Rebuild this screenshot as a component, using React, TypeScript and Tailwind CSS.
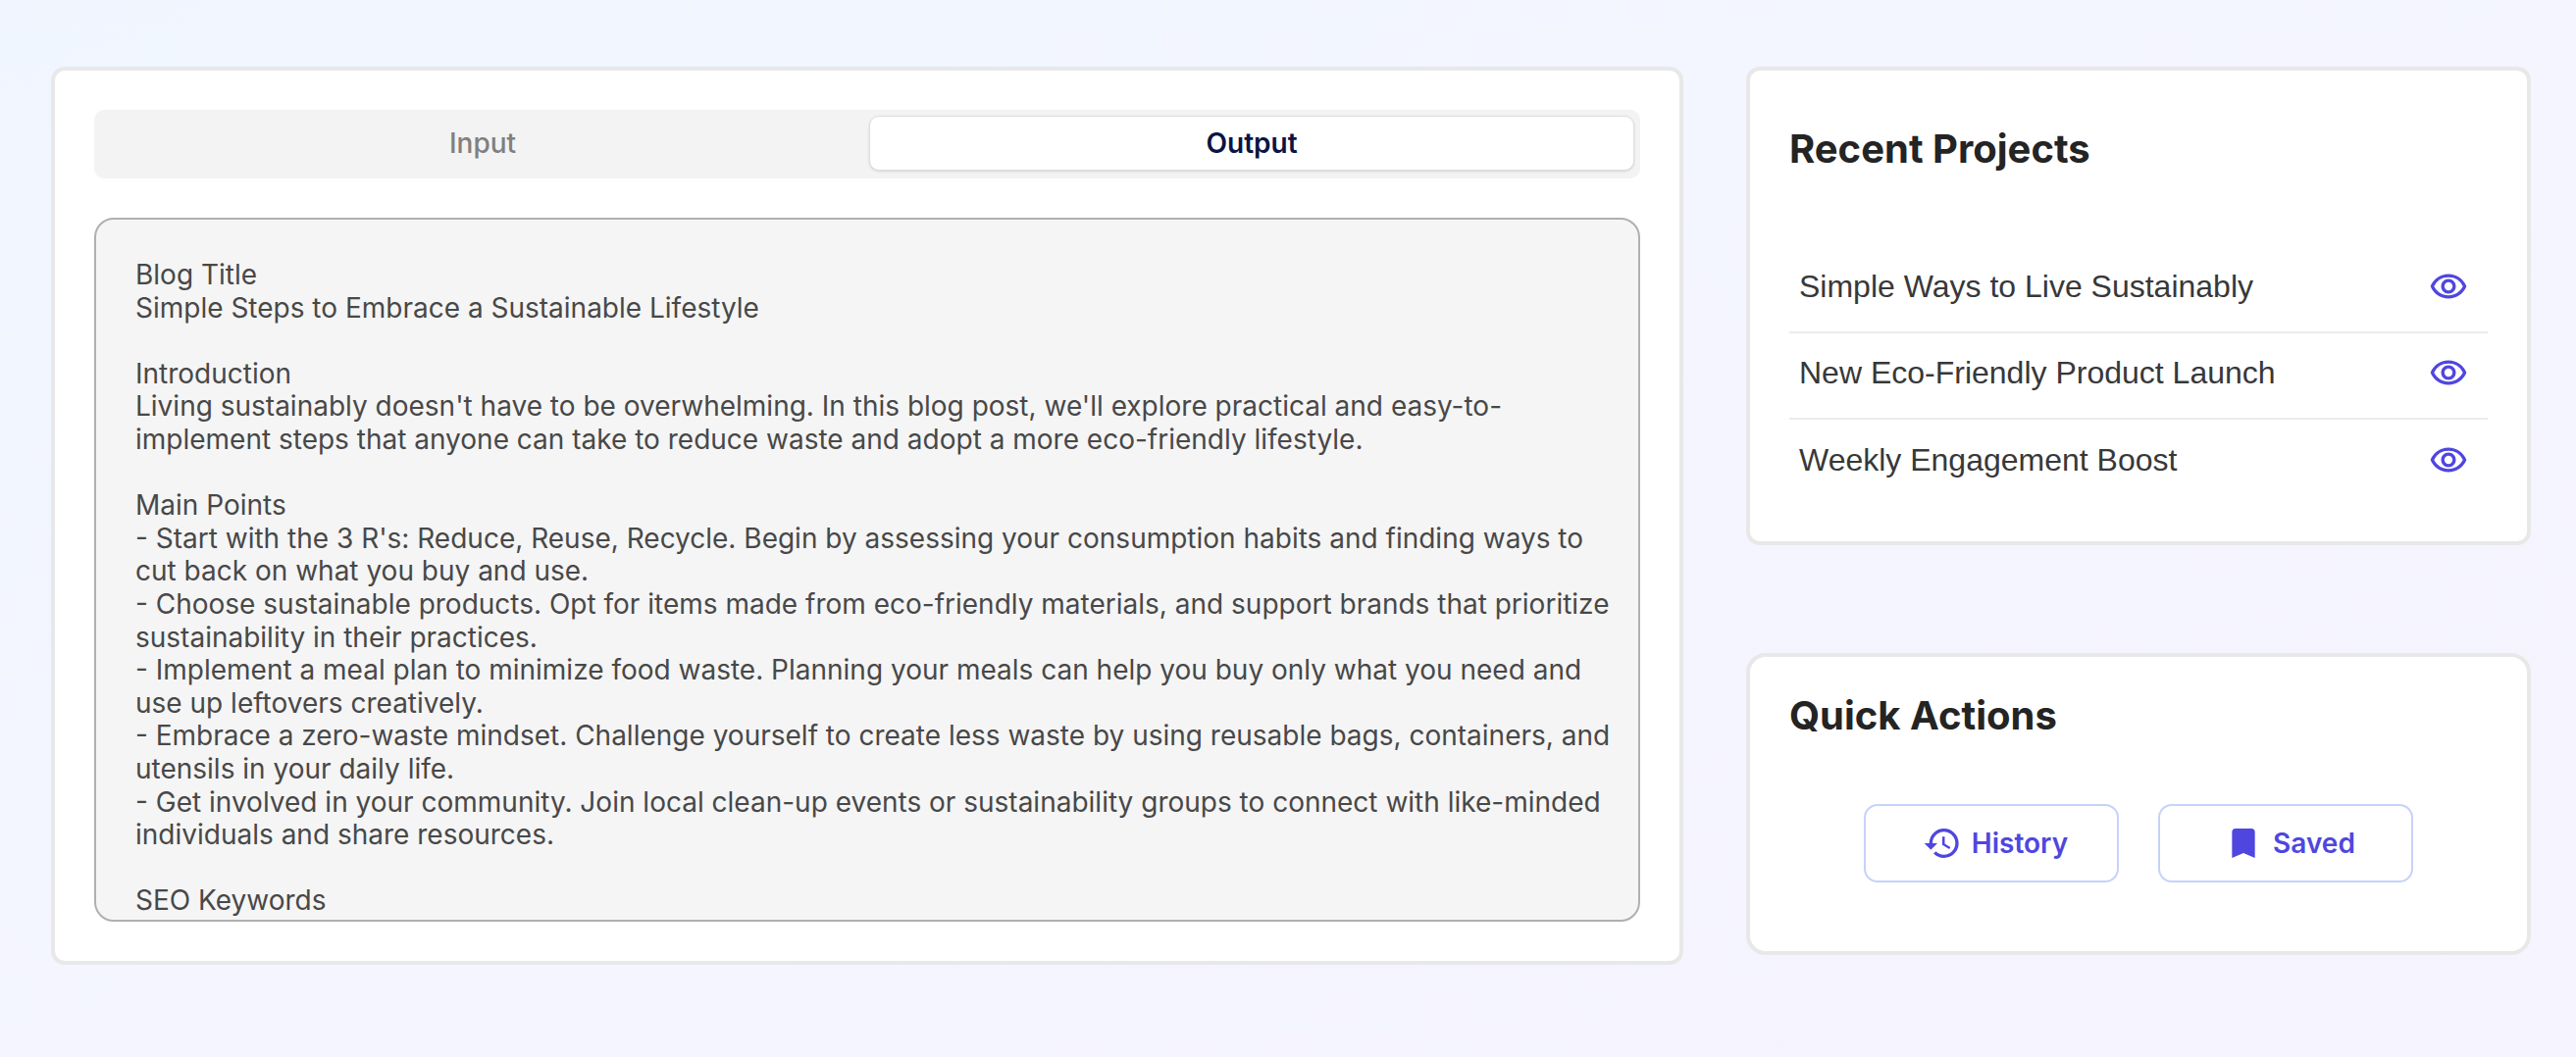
import React from "react";
import { MdHistory, MdBookmark, MdOutlineRemoveRedEye } from "react-icons/md";

const output = `Blog Title
Simple Steps to Embrace a Sustainable Lifestyle

Introduction
Living sustainably doesn't have to be overwhelming. In this blog post, we'll explore practical and easy-to-implement steps that anyone can take to reduce waste and adopt a more eco-friendly lifestyle.

Main Points
- Start with the 3 R's: Reduce, Reuse, Recycle. Begin by assessing your consumption habits and finding ways to cut back on what you buy and use.
- Choose sustainable products. Opt for items made from eco-friendly materials, and support brands that prioritize sustainability in their practices.
- Implement a meal plan to minimize food waste. Planning your meals can help you buy only what you need and use up leftovers creatively.
- Embrace a zero-waste mindset. Challenge yourself to create less waste by using reusable bags, containers, and utensils in your daily life.
- Get involved in your community. Join local clean-up events or sustainability groups to connect with like-minded individuals and share resources.

SEO Keywords
`;

const projects = [
  "Simple Ways to Live Sustainably",
  "New Eco-Friendly Product Launch",
  "Weekly Engagement Boost",
];

const card = "border-4 border-[#e8e8e8] bg-white px-10";
const heading = "text-[40px] leading-[48px] font-bold text-[#242424]";
const action =
  "flex h-20 w-[260px] items-center justify-center gap-2.5 rounded-[14px] border-2 border-[#c7d2fa] bg-white pl-2 text-[28px] font-semibold text-[#4f46e0]";

export default function App() {
  return (
    <main className="grid min-h-screen grid-cols-[minmax(0,1664fr)_minmax(0,800fr)] items-start gap-16 bg-linear-to-br from-[#f0f6ff] via-[#f4f5ff] to-[#f6f4fe] pt-[68px] pr-[46px] pb-[94px] pl-[52px] font-['Inter',sans-serif]">
      <section className={`${card} rounded-[14px] py-10`}>
        <div role="tablist" className="grid grid-cols-2 gap-1 rounded-[10px] bg-[#f3f3f3] px-1.5 pt-1.5 pb-2">
          <button role="tab" aria-selected="false" className="h-14 rounded-[10px] text-[28px] font-medium text-[#808080]">Input</button>
          <button role="tab" aria-selected="true" className="h-14 rounded-[10px] border border-[#dedede] bg-white text-[28px] font-semibold text-[#0a1445] shadow-sm">Output</button>
        </div>
        <textarea aria-label="Output" readOnly defaultValue={output} className="mt-10 block h-[718px] w-full resize-none overflow-hidden rounded-[20px] border-2 border-[#b0b0b0] bg-[#f5f5f5] pt-10 pr-6 pl-10 text-[28px] leading-[1.2] text-[#484848]" />
      </section>
      <div className="flex flex-col gap-[110px]">
        <section className={`${card} rounded-[14px] pt-14 pb-9`}>
          <h2 className={heading}>Recent Projects</h2>
          <ul className="mt-19">
            {projects.map((p) => (
              <li key={p} className="flex h-[88px] items-center justify-between border-b-2 border-[#ebebeb] pr-5 pb-1.5 pl-2.5 last:border-0">
                <span className="font-['Liberation_Sans',sans-serif] text-[32px] text-[#383838]">{p}</span>
                <button aria-label={`View ${p}`} className="text-[#4f46e0]"><MdOutlineRemoveRedEye size={40} /></button>
              </li>
            ))}
          </ul>
        </section>
        <section className={`${card} rounded-[20px] pt-9 pb-[70px]`}>
          <h2 className={heading}>Quick Actions</h2>
          <div className="mt-[66px] flex justify-center gap-10">
            <button className={action}><MdHistory size={40} />History</button>
            <button className={action}><MdBookmark size={40} />Saved</button>
          </div>
        </section>
      </div>
    </main>
  );
}
